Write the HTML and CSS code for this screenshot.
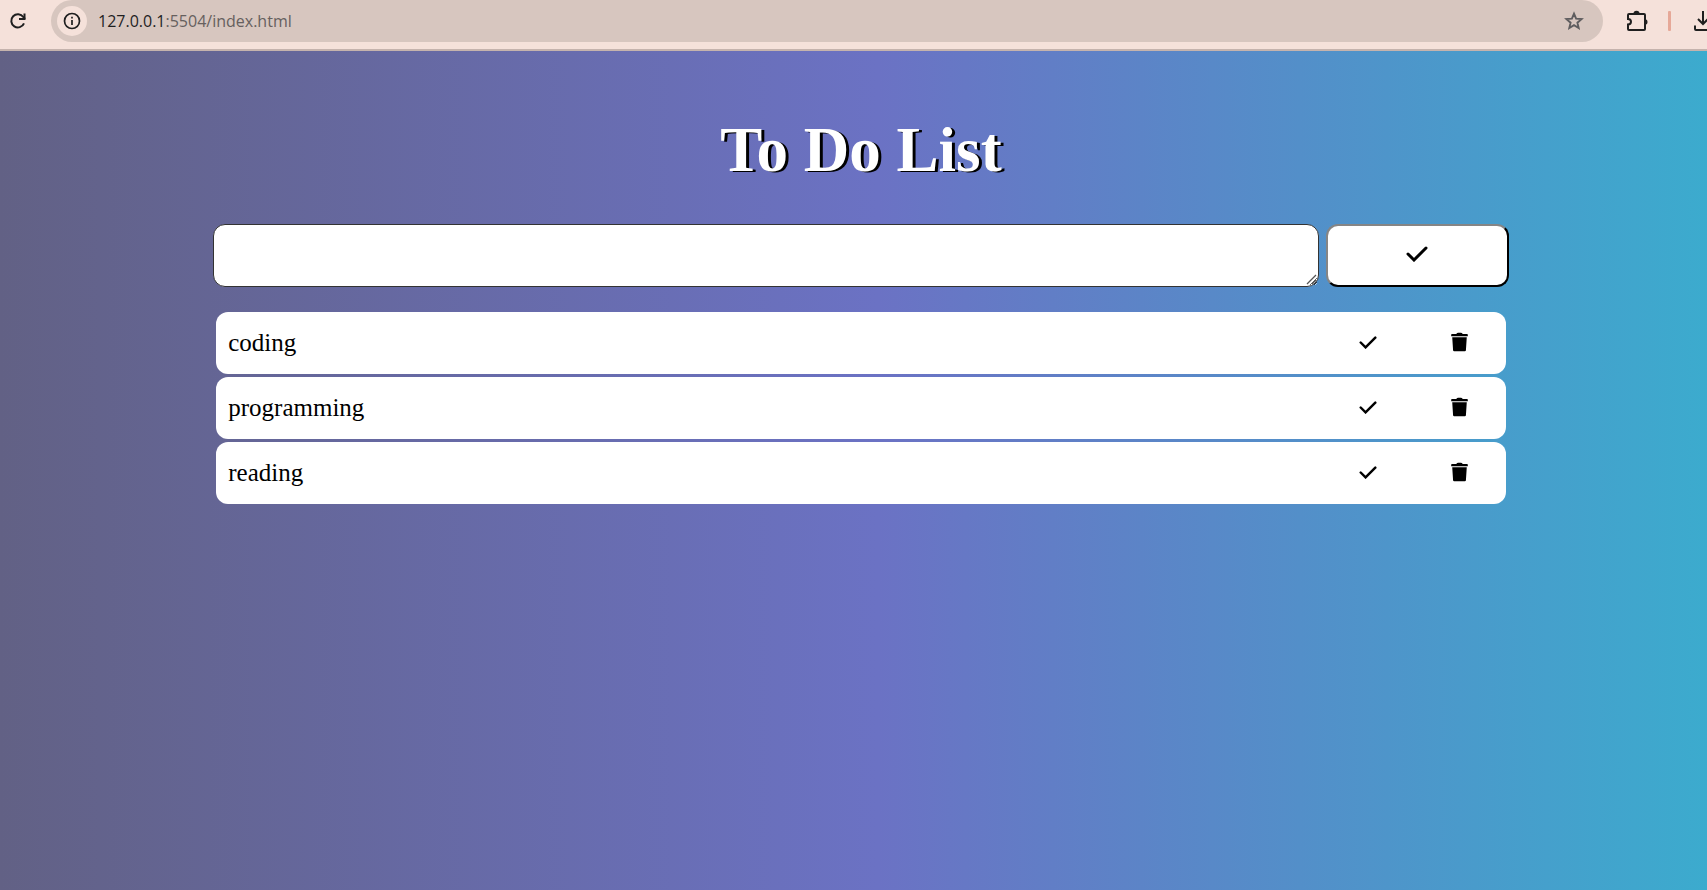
FILE: index.html
```html
<!DOCTYPE html>
<html lang="en">
<head>
<meta charset="utf-8">
<title>To Do List</title>
<link rel="stylesheet" href="styles.css">
</head>
<body>
<svg class="symbols" aria-hidden="true">
  <symbol id="check" viewBox="0 0 22 16"><path d="M2 8l6 6L20 2" fill="none" stroke="currentColor" stroke-width="3" stroke-linecap="round" stroke-linejoin="miter"/></symbol>
  <symbol id="trash" viewBox="0 0 18 20"><path d="M5.500 1.500Q6.500 .3 7.500 .3h3q1 0 2 1.200h4.500q.8 0 .8.8v1.500H.2V2.300q0-.8.8-.8zM1.300 5h15.400l-.9 13.700q-.1 1.100-1.200 1.100H3.400q-1.100 0-1.200-1.100z" fill="currentColor"/></symbol>
</svg>
<header class="toolbar">
  <button class="tool reload" type="button" aria-label="Reload">
    <svg width="18" height="18" viewBox="0 0 18 18" fill="none" stroke="currentColor" stroke-width="2"><path d="M15 11.300A6.600 6.600 0 1 1 14.300 5L16 7"/><path d="M15.500 1.500v5.500h-5.500" /></svg>
  </button>
  <div class="address">
    <button class="tool info" type="button" aria-label="Site information">
      <svg width="18" height="18" viewBox="0 0 18 18" fill="none" stroke="currentColor" stroke-width="1.700"><circle cx="9" cy="9" r="7.500"/><path d="M9 8v5M9 4.800v1.800"/></svg>
    </button>
    <a class="url" href="#"><span class="host">127.0.0.1</span>:5504/index.html</a>
    <button class="tool star" type="button" aria-label="Bookmark">
      <svg width="20" height="20" viewBox="0 0 20 20" fill="none" stroke="currentColor" stroke-width="1.900"><path d="M10 2.600l2.100 5 5.500.5-4.200 3.600 1.300 5.400L10 14.200l-4.700 2.900 1.300-5.400-4.200-3.600 5.500-.5z"/></svg>
    </button>
  </div>
  <button class="tool extensions" type="button" aria-label="Extensions">
    <svg width="22" height="22" viewBox="0 0 22 22"><path d="M3 4h15q1 0 1 1v14q0 1-1 1H3q-1 0-1-1v-4.500q3-.3 3-2.800T2 9V5q0-1 1-1z" fill="none" stroke="currentColor" stroke-width="2"/><path d="M7.500 3.500a3 2.700 0 0 1 6 0zM19 9.200a2.500 2.800 0 0 1 0 5.600z" fill="currentColor"/></svg>
  </button>
  <span class="divider"></span>
  <button class="tool download" type="button" aria-label="Downloads">
    <svg width="20" height="22" viewBox="0 0 20 22" fill="none" stroke="currentColor" stroke-width="2"><path d="M10 1v13M5 9l5 5 5-5M2 15.500v3.500q0 1 1 1h14q1 0 1-1v-3.500"/></svg>
  </button>
</header>
<main class="page">
  <div class="container">
    <h1 class="title">To Do List</h1>
    <form class="entry">
      <div class="entry-field">
        <textarea class="entry-text" aria-label="New task"></textarea>
        <svg class="grip" viewBox="0 0 12 12" aria-hidden="true"><path d="M1 10L10 1M6 10l4-4" stroke="#555" stroke-width="1.300"/></svg>
      </div>
      <button class="entry-add" type="button" aria-label="Add task"><svg class="icon-large"><use href="#check"/></svg></button>
    </form>
    <ul class="tasks">
      <li class="task"><span class="task-name">coding</span><button class="task-button" type="button" aria-label="Complete coding"><svg class="icon-check"><use href="#check"/></svg></button><button class="task-button" type="button" aria-label="Delete coding"><svg class="icon-trash"><use href="#trash"/></svg></button></li>
      <li class="task"><span class="task-name">programming</span><button class="task-button" type="button" aria-label="Complete programming"><svg class="icon-check"><use href="#check"/></svg></button><button class="task-button" type="button" aria-label="Delete programming"><svg class="icon-trash"><use href="#trash"/></svg></button></li>
      <li class="task"><span class="task-name">reading</span><button class="task-button" type="button" aria-label="Complete reading"><svg class="icon-check"><use href="#check"/></svg></button><button class="task-button" type="button" aria-label="Delete reading"><svg class="icon-trash"><use href="#trash"/></svg></button></li>
    </ul>
  </div>
</main>
</body>
</html>
```
FILE: styles.css
```css
* { box-sizing: border-box; }
body {
  margin: 0;
  min-height: 100vh;
  display: flex;
  flex-direction: column;
  overflow: hidden;
  font-family: "Liberation Serif", serif;
}
.symbols { display: none; }
svg { display: block; }
.toolbar {
  display: flex;
  align-items: flex-start;
  height: 51px;
  padding-left: 8px;
  background: #f5e1da;
  border-bottom: 2px solid #c5b3ad;
}
.tool {
  flex: none;
  display: flex;
  align-items: center;
  justify-content: center;
  height: 42px;
  padding: 0;
  border: 0;
  background: none;
  color: #1f1f1f;
}
.reload { width: 20px; }
.address {
  flex: 1;
  display: flex;
  align-items: center;
  height: 42px;
  margin-left: 23px;
  padding: 0 18px 0 6px;
  border-radius: 21px;
  background: #d7c6bf;
}
.info {
  width: 30px;
  height: 30px;
  border-radius: 50%;
  background: #f5e1da;
}
.url {
  flex: 1;
  margin-left: 11px;
  font: 16px "Open Sans", sans-serif;
  color: #66605e;
  text-decoration: none;
}
.host { color: #1f1f1f; }
.star { width: 22px; color: #5f5d5f; }
.extensions { width: 22px; margin-left: 23px; }
.divider {
  width: 3px;
  height: 20px;
  margin: 11px 22px 0 20px;
  border-radius: 1px;
  background: #e6a898;
}
.download { width: 20px; margin-right: -6px; }
.page {
  flex: 1;
  margin-right: -15px;
  background: linear-gradient(90deg, #626185, #6b72c4 51%, #3bacce);
}
.container { width: calc(75% - 2px); margin: 0 auto; }
.title {
  margin: 62px 0 36px;
  font-size: 63px;
  line-height: 75px;
  text-align: center;
  color: #fff;
  text-shadow: 3px 1px #000;
}
.entry {
  display: flex;
  gap: 7px;
  margin: 0 -3px 25px;
}
.entry-field {
  flex: 1;
  display: flex;
  position: relative;
}
.entry-text {
  flex: 1;
  height: 63px;
  padding: 12px;
  border: 1px solid #333;
  border-radius: 12px;
  font: 25px "Liberation Serif", serif;
}
.grip {
  position: absolute;
  right: 1px;
  bottom: 1px;
  width: 12px;
  height: 12px;
  pointer-events: none;
}
.entry-add {
  width: 183px;
  display: flex;
  align-items: center;
  justify-content: center;
  height: 63px;
  padding: 0 0 4px;
  border: 2px solid;
  border-color: #858585 #000 #000 #858585;
  border-radius: 12px;
  background: #fff;
  color: #000;
}
.icon-large { width: 22px; height: 16px; }
.tasks {
  display: grid;
  gap: 3px;
  margin: 0;
  padding: 0;
  list-style: none;
}
.task {
  display: flex;
  height: 62px;
  padding-left: 12px;
  border-radius: 12px;
  background: #fff;
}
.task-name { flex: 1; font-size: 25px; line-height: 62px; }
.task-button {
  width: 92px;
  display: flex;
  align-items: center;
  justify-content: center;
  padding: 0 0 2px;
  border: 0;
  background: none;
  color: #000;
}
.icon-check { width: 18px; height: 13px; }
.icon-trash { width: 17px; height: 20px; }
```
